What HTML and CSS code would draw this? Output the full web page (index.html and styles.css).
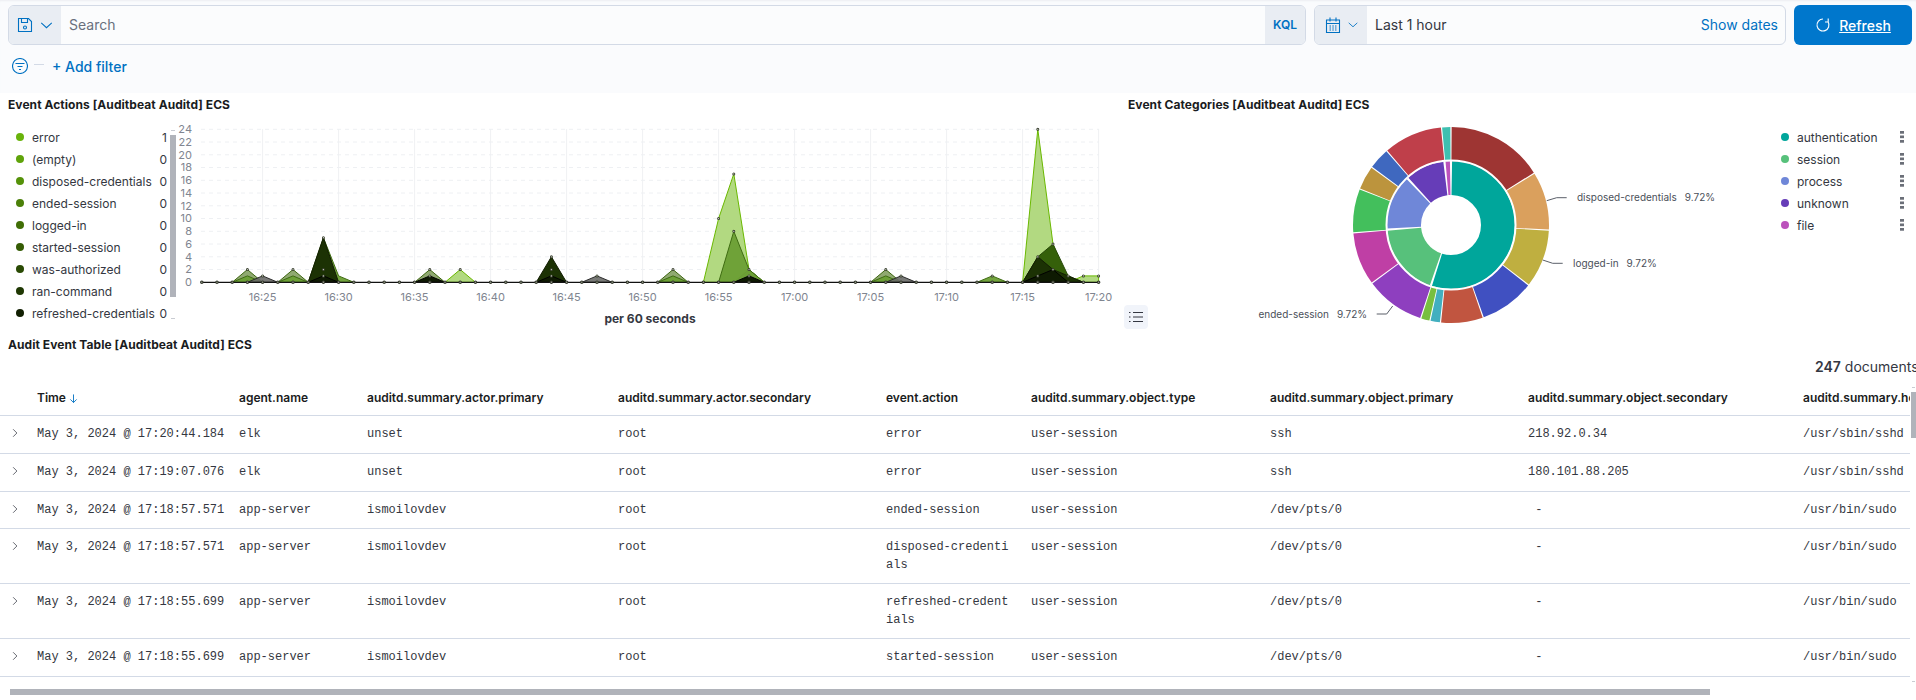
FILE: index.html
```html
<!DOCTYPE html>
<html lang="en">
<head>
<meta charset="utf-8">
<title>Audit dashboard</title>
<link rel="stylesheet" href="styles.css">
</head>
<body>
<header class="topbar">
  <div class="query-row">
    <div class="search">
      <button class="prepend">
        <svg class="ico" viewBox="0 0 16 16" width="16" height="16"><path d="M1.500 1.500h10l3 3v10h-13z M4.500 1.500v4h6v-4"/><circle cx="8" cy="10.500" r="1.500"/></svg>
        <svg class="chev" viewBox="0 0 14 8" width="13" height="7"><path d="M1 1l6 5.500L13 1"/></svg>
      </button>
      <div class="placeholder">Search</div>
      <div class="kql">KQL</div>
    </div>
    <div class="datepicker">
      <button class="prepend">
        <svg class="ico" viewBox="0 0 16 16" width="16" height="16"><path d="M1.500 3h13v12.500h-13z M1.500 6.500h13 M5 .5v4 M11 .5v4 M4.500 9h1.500 M7.300 9h1.500 M10 9h1.500 M4.500 11h1.500 M7.300 11h1.500 M10 11h1.500 M4.500 13h1.500 M7.300 13h1.500 M10 13h1.500"/></svg>
        <svg class="chev" viewBox="0 0 14 8" width="10" height="6"><path d="M1 1l6 5.500L13 1"/></svg>
      </button>
      <div class="range">Last 1 hour</div>
      <div class="show-dates">Show dates</div>
    </div>
    <button class="refresh">
      <svg class="ico-white" viewBox="0 0 16 16" width="16" height="16"><path d="M13.200 5A6 6 0 1 1 8 2 M13.200 1.500V5H10"/></svg>
      <span>Refresh</span>
    </button>
  </div>
  <div class="filter-row">
    <svg class="ico" viewBox="0 0 16 16" width="16" height="16"><circle cx="8" cy="8" r="7.500"/><path d="M3.500 5.500h9 M5.500 8.500h5 M7 11.500h2"/></svg>
    <span class="dash"></span>
    <span class="add-filter">+ Add filter</span>
  </div>
</header>

<main>
  <section class="panels">
    <div class="panel">
      <h2 class="title">Event Actions [Auditbeat Auditd] ECS</h2>
      <div class="panel-body">
        <ul class="legend actions">
          <li><i class="dot c1"></i><span class="name">error</span><span class="val">1</span></li>
          <li><i class="dot c2"></i><span class="name">(empty)</span><span class="val">0</span></li>
          <li><i class="dot c3"></i><span class="name">disposed-credentials</span><span class="val">0</span></li>
          <li><i class="dot c4"></i><span class="name">ended-session</span><span class="val">0</span></li>
          <li><i class="dot c5"></i><span class="name">logged-in</span><span class="val">0</span></li>
          <li><i class="dot c6"></i><span class="name">started-session</span><span class="val">0</span></li>
          <li><i class="dot c7"></i><span class="name">was-authorized</span><span class="val">0</span></li>
          <li><i class="dot c8"></i><span class="name">ran-command</span><span class="val">0</span></li>
          <li><i class="dot c9"></i><span class="name">refreshed-credentials</span><span class="val">0</span></li>
        </ul>
        <div class="legend-scroll"><div class="legend-thumb"></div></div>
        <svg class="area-chart" viewBox="176 120 944 210" width="944" height="210">
          <g class="grid-v">
            <path d="M262.600 129V282M338.600 129V282M414.600 129V282M490.600 129V282M566.600 129V282M642.600 129V282M718.600 129V282M794.600 129V282M870.600 129V282M946.600 129V282M1022.600 129V282M1098.600 129V282"/>
          </g>
          <g class="grid-h">
            <path d="M201 129.300H1099M201 142H1099M201 154.800H1099M201 167.500H1099M201 180.300H1099M201 193H1099M201 205.800H1099M201 218.500H1099M201 231.300H1099M201 244H1099M201 256.800H1099M201 269.500H1099"/>
          </g>
          <g class="ticks-y">
            <text x="192" y="133">24</text><text x="192" y="146">22</text><text x="192" y="159">20</text><text x="192" y="171">18</text><text x="192" y="184">16</text><text x="192" y="197">14</text><text x="192" y="210">12</text><text x="192" y="222">10</text><text x="192" y="235">8</text><text x="192" y="248">6</text><text x="192" y="261">4</text><text x="192" y="273">2</text><text x="192" y="286">0</text>
          </g>
          <g class="ticks-x">
            <text x="262.600" y="301">16:25</text><text x="338.600" y="301">16:30</text><text x="414.600" y="301">16:35</text><text x="490.600" y="301">16:40</text><text x="566.600" y="301">16:45</text><text x="642.600" y="301">16:50</text><text x="718.600" y="301">16:55</text><text x="794.600" y="301">17:00</text><text x="870.600" y="301">17:05</text><text x="946.600" y="301">17:10</text><text x="1022.600" y="301">17:15</text><text x="1098.600" y="301">17:20</text>
          </g>
          <text class="axis-title" x="650" y="323">per 60 seconds</text>

          <g class="s-light">
            <path d="M445 282.300L460.200 269.550L475.400 282.300Z"/>
            <path d="M703.400 282.300L718.600 218.550L733.800 173.900L749 269.550L764.200 282.300Z"/>
            <path d="M1022.600 282.300L1037.800 129.300L1053 244.050L1068.200 282.300Z"/>
            <path d="M1068.200 282.300L1083.400 275.900H1098.600V282.300Z"/>
          </g>
          <g class="s-olive">
            <path d="M232.200 282.300L247.400 269.550L262.600 282.300Z"/>
            <path d="M277.800 282.300L293 269.550L308.200 282.300Z"/>
            <path d="M414.600 282.300L429.800 269.550L445 282.300Z"/>
            <path d="M657.800 282.300L673 269.550L688.200 282.300Z"/>
            <path d="M733.800 282.300L749 269.550L764.200 282.300Z"/>
            <path d="M870.600 282.300L885.800 269.550L901 282.300Z"/>
          </g>
          <g class="s-green">
            <path d="M232.200 282.300L247.400 275.900L262.600 282.300Z"/>
            <path d="M277.800 282.300L293 275.900L308.200 282.300Z"/>
            <path d="M308.200 282.300L323.400 237.700L338.600 275.900L353.800 282.300Z"/>
            <path d="M657.800 282.300L673 275.900L688.200 282.300Z"/>
            <path d="M718.600 282.300L733.800 231.300L749 269.550L764.200 282.300Z"/>
            <path d="M870.600 282.300L885.800 275.900L901 282.300Z"/>
            <path d="M977 282.300L992.200 275.900L1007.400 282.300Z"/>
          </g>
          <g class="s-grey">
            <path d="M247.400 282.300L262.600 275.900L277.800 282.300Z"/>
            <path d="M581.800 282.300L597 275.900L612.200 282.300Z"/>
            <path d="M885.800 282.300L901 275.900L916.200 282.300Z"/>
          </g>
          <path class="s-forest" d="M1022.600 282.300L1037.800 256.800L1053 244.050L1068.200 275.900L1083.400 282.300Z"/>
          <g class="s-dark">
            <path d="M308.200 282.300L323.400 237.700L338.600 282.300Z"/>
            <path d="M536.200 282.300L551.400 256.800L566.600 282.300Z"/>
            <path d="M1022.600 282.300L1037.800 256.800L1053 269.550L1068.200 275.900L1083.400 282.300Z"/>
          </g>
          <g class="s-black">
            <path d="M308.200 282.300L323.400 275.900L338.600 282.300Z"/>
            <path d="M414.600 282.300L429.800 275.900L445 282.300Z"/>
            <path d="M536.200 282.300L551.400 275.900L566.600 282.300Z"/>
            <path d="M733.800 282.300L749 275.900L764.200 282.300Z"/>
            <path d="M1022.600 282.300L1037.800 275.900L1053 269.550L1068.200 282.300Z"/>
          </g>
          <path class="baseline" d="M201.800 282.300H1098.600"/>
          <path class="marks-out" d="M201.800 282.300H1098.800"/>
          <path class="marks-in" d="M201.800 282.300H1098.800"/>
          <path class="peaks-out" d="M247.400 269.550h0M262.600 275.900h0M293 269.550h0M323.400 237.700h0M323.400 269.550h0M323.400 275.900h0M429.800 269.550h0M429.800 275.900h0M460.200 269.550h0M551.400 256.800h0M551.400 269.550h0M551.400 275.900h0M597 275.900h0M673 269.550h0M718.600 218.550h0M733.800 173.900h0M733.800 231.300h0M749 269.550h0M749 275.900h0M885.800 269.550h0M901 275.900h0M992.200 275.900h0M1037.800 129.300h0M1037.800 256.800h0M1037.800 275.900h0M1053 244.050h0M1053 269.550h0M1068.200 275.900h0M1083.400 275.900h0M1098.600 275.900h0"/>
          <path class="peaks-in" d="M247.400 269.550h0M262.600 275.900h0M293 269.550h0M323.400 237.700h0M323.400 269.550h0M323.400 275.900h0M429.800 269.550h0M429.800 275.900h0M460.200 269.550h0M551.400 256.800h0M551.400 269.550h0M551.400 275.900h0M597 275.900h0M673 269.550h0M718.600 218.550h0M733.800 173.900h0M733.800 231.300h0M749 269.550h0M749 275.900h0M885.800 269.550h0M901 275.900h0M992.200 275.900h0M1037.800 129.300h0M1037.800 256.800h0M1037.800 275.900h0M1053 244.050h0M1053 269.550h0M1068.200 275.900h0M1083.400 275.900h0M1098.600 275.900h0"/>
        </svg>
      </div>
    </div>

    <div class="panel categories">
      <h2 class="title">Event Categories [Auditbeat Auditd] ECS</h2>
      <div class="panel-body">
        <svg class="pie" viewBox="1124 120 650 210" width="650" height="210">
          <g class="ring-inner" transform="rotate(-90 1451 225)">
            <circle cx="1451" cy="225" r="47" pathLength="360" stroke="#00a69b" stroke-dasharray="196.400 360" stroke-dashoffset="-1"/>
            <circle cx="1451" cy="225" r="47" pathLength="360" stroke="#57c17b" stroke-dasharray="65.300 360" stroke-dashoffset="-199.400"/>
            <circle cx="1451" cy="225" r="47" pathLength="360" stroke="#6f87d8" stroke-dasharray="49.300 360" stroke-dashoffset="-266.700"/>
            <circle cx="1451" cy="225" r="47" pathLength="360" stroke="#663db8" stroke-dasharray="35 360" stroke-dashoffset="-318"/>
            <circle cx="1451" cy="225" r="47" pathLength="360" stroke="#bc52bc" stroke-dasharray="4 360" stroke-dashoffset="-355"/>
          </g>
          <g class="ring-outer" transform="rotate(-90 1451 225)">
            <circle cx="1451" cy="225" r="81" pathLength="360" stroke="#9e3533" stroke-dasharray="57.300 360" stroke-dashoffset="-.4"/>
            <circle cx="1451" cy="225" r="81" pathLength="360" stroke="#daa05d" stroke-dasharray="34.300 360" stroke-dashoffset="-58.400"/>
            <circle cx="1451" cy="225" r="81" pathLength="360" stroke="#bfaf40" stroke-dasharray="34 360" stroke-dashoffset="-93.400"/>
            <circle cx="1451" cy="225" r="81" pathLength="360" stroke="#4050c1" stroke-dasharray="32.300 360" stroke-dashoffset="-128.100"/>
            <circle cx="1451" cy="225" r="81" pathLength="360" stroke="#c15540" stroke-dasharray="24.800 360" stroke-dashoffset="-161.100"/>
            <circle cx="1451" cy="225" r="81" pathLength="360" stroke="#42afbf" stroke-dasharray="5.500 360" stroke-dashoffset="-186.600"/>
            <circle cx="1451" cy="225" r="81" pathLength="360" stroke="#78bf3f" stroke-dasharray="4.900 360" stroke-dashoffset="-192.800"/>
            <circle cx="1451" cy="225" r="81" pathLength="360" stroke="#8e3fbf" stroke-dasharray="34.900 360" stroke-dashoffset="-198.400"/>
            <circle cx="1451" cy="225" r="81" pathLength="360" stroke="#bf3fa5" stroke-dasharray="30.900 360" stroke-dashoffset="-234"/>
            <circle cx="1451" cy="225" r="81" pathLength="360" stroke="#43bf5c" stroke-dasharray="25.600 360" stroke-dashoffset="-265.600"/>
            <circle cx="1451" cy="225" r="81" pathLength="360" stroke="#bc943d" stroke-dasharray="13.800 360" stroke-dashoffset="-291.900"/>
            <circle cx="1451" cy="225" r="81" pathLength="360" stroke="#3f68bf" stroke-dasharray="12.300 360" stroke-dashoffset="-306.400"/>
            <circle cx="1451" cy="225" r="81" pathLength="360" stroke="#bf3f4a" stroke-dasharray="34.600 360" stroke-dashoffset="-319.400"/>
            <circle cx="1451" cy="225" r="81" pathLength="360" stroke="#3fbfb0" stroke-dasharray="4.900 360" stroke-dashoffset="-354.700"/>
          </g>
          <circle class="ring-gap" cx="1451" cy="225" r="64.500"/>
          <path class="leader" d="M1546.700 200.700L1556.700 197.700H1566.700"/>
          <path class="leader" d="M1542.700 260L1552.700 263.300H1562.700"/>
          <path class="leader" d="M1392.700 306L1386.700 314H1376.700"/>
          <text class="pie-label" x="1577" y="201">disposed-credentials<tspan dx="8">9.72%</tspan></text>
          <text class="pie-label" x="1573" y="267">logged-in<tspan dx="8">9.72%</tspan></text>
          <text class="pie-label" x="1258.500" y="317.500">ended-session<tspan dx="8">9.72%</tspan></text>
        </svg>
        <button class="legend-toggle">
          <svg viewBox="0 0 16 16" width="16" height="16"><path d="M5 3.500h10M5 8h10M5 12.500h10M1 3.500h1.500M1 8h1.500M1 12.500h1.500"/></svg>
        </button>
        <ul class="legend cats">
          <li><i class="dot k1"></i><span class="name">authentication</span><i class="kebab"></i></li>
          <li><i class="dot k2"></i><span class="name">session</span><i class="kebab"></i></li>
          <li><i class="dot k3"></i><span class="name">process</span><i class="kebab"></i></li>
          <li><i class="dot k4"></i><span class="name">unknown</span><i class="kebab"></i></li>
          <li><i class="dot k5"></i><span class="name">file</span><i class="kebab"></i></li>
        </ul>
      </div>
    </div>
  </section>

  <section class="audit">
    <h2 class="title audit-title">Audit Event Table [Auditbeat Auditd] ECS</h2>
    <div class="hits"><b>247</b> documents</div>
    <div class="table-area">
      <div class="table-clip">
        <table>
          <colgroup>
            <col class="w0"><col class="w1"><col class="w2"><col class="w3"><col class="w4"><col class="w5"><col class="w6"><col class="w7"><col class="w8"><col class="w9">
          </colgroup>
          <thead>
            <tr>
              <th></th>
              <th>Time <svg class="sort" viewBox="0 0 10 10" width="9" height="9"><path d="M5 .5v9M1.500 6L5 9.500 8.500 6"/></svg></th>
              <th>agent.name</th>
              <th>auditd.summary.actor.primary</th>
              <th>auditd.summary.actor.secondary</th>
              <th>event.action</th>
              <th>auditd.summary.object.type</th>
              <th>auditd.summary.object.primary</th>
              <th>auditd.summary.object.secondary</th>
              <th>auditd.summary.how</th>
            </tr>
          </thead>
          <tbody>
            <tr>
              <td class="exp"><svg viewBox="0 0 8 12" width="6" height="10"><path d="M1.500 1l5 5-5 5"/></svg></td>
              <td>May 3, 2024 @ 17:20:44.184</td><td>elk</td><td>unset</td><td>root</td><td class="wrap">error</td><td>user-session</td><td>ssh</td><td>218.92.0.34</td><td>/usr/sbin/sshd</td>
            </tr>
            <tr>
              <td class="exp"><svg viewBox="0 0 8 12" width="6" height="10"><path d="M1.500 1l5 5-5 5"/></svg></td>
              <td>May 3, 2024 @ 17:19:07.076</td><td>elk</td><td>unset</td><td>root</td><td class="wrap">error</td><td>user-session</td><td>ssh</td><td>180.101.88.205</td><td>/usr/sbin/sshd</td>
            </tr>
            <tr class="tight">
              <td class="exp"><svg viewBox="0 0 8 12" width="6" height="10"><path d="M1.500 1l5 5-5 5"/></svg></td>
              <td>May 3, 2024 @ 17:18:57.571</td><td>app-server</td><td>ismoilovdev</td><td>root</td><td class="wrap">ended-session</td><td>user-session</td><td>/dev/pts/0</td><td>&nbsp;-</td><td>/usr/bin/sudo</td>
            </tr>
            <tr class="tight">
              <td class="exp"><svg viewBox="0 0 8 12" width="6" height="10"><path d="M1.500 1l5 5-5 5"/></svg></td>
              <td>May 3, 2024 @ 17:18:57.571</td><td>app-server</td><td>ismoilovdev</td><td>root</td><td class="wrap">disposed-credentials</td><td>user-session</td><td>/dev/pts/0</td><td>&nbsp;-</td><td>/usr/bin/sudo</td>
            </tr>
            <tr class="tight">
              <td class="exp"><svg viewBox="0 0 8 12" width="6" height="10"><path d="M1.500 1l5 5-5 5"/></svg></td>
              <td>May 3, 2024 @ 17:18:55.699</td><td>app-server</td><td>ismoilovdev</td><td>root</td><td class="wrap">refreshed-credentials</td><td>user-session</td><td>/dev/pts/0</td><td>&nbsp;-</td><td>/usr/bin/sudo</td>
            </tr>
            <tr>
              <td class="exp"><svg viewBox="0 0 8 12" width="6" height="10"><path d="M1.500 1l5 5-5 5"/></svg></td>
              <td>May 3, 2024 @ 17:18:55.699</td><td>app-server</td><td>ismoilovdev</td><td>root</td><td class="wrap">started-session</td><td>user-session</td><td>/dev/pts/0</td><td>&nbsp;-</td><td>/usr/bin/sudo</td>
            </tr>
          </tbody>
        </table>
      </div>
      <div class="vscroll"><div class="vthumb"></div></div>
    </div>
    <div class="hscroll"><div class="hthumb"></div></div>
  </section>
</main>
</body>
</html>
```
FILE: styles.css
```css
* { box-sizing: border-box; }
html, body { margin: 0; height: 700px; overflow: hidden; background: #fff; }
body { font-family: Inter, "Liberation Sans", sans-serif; font-size: 12px; color: #343741; }
button { font: inherit; border: 0; padding: 0; margin: 0; }
ul { list-style: none; margin: 0; padding: 0; }
h2 { margin: 0; }

/* top bar */
.topbar { height: 93px; background: #fafbfd; padding: 5px 4px 0 8px; box-shadow: inset 0 2px 2px -1px #eceef2; }
.query-row { display: flex; height: 40px; gap: 8px; }
.search, .datepicker { display: flex; align-items: stretch; border: 1px solid #d3dae6; border-radius: 6px; overflow: hidden; background: #fbfcfd; font-size: 14px; }
.search { flex: 0 0 1298px; }
.datepicker { flex: 0 0 472px; }
.prepend { width: 52px; background: #e9edf3; display: flex; align-items: center; justify-content: center; gap: 7px; flex: none; }
.ico { fill: none; stroke: #0071c2; stroke-width: 1.100; flex: none; }
.chev { fill: none; stroke: #0071c2; stroke-width: 1.200; }
.placeholder { flex: 1; padding-left: 8px; line-height: 38px; color: #69707d; }
.kql { width: 40px; background: #e9edf3; color: #0071c2; font-size: 12px; font-weight: 600; line-height: 38px; text-align: center; }
.range { flex: 1; padding-left: 8px; line-height: 38px; color: #343741; }
.show-dates { padding-right: 7px; line-height: 38px; color: #0071c2; }
.refresh { flex: 0 0 118px; background: #0077cc; color: #fff; border-radius: 6px; font-size: 14px; font-weight: 500; display: flex; align-items: center; justify-content: center; gap: 8px; }
.refresh span { text-decoration: underline; }
.ico-white { fill: none; stroke: #fff; stroke-width: 1.100; }
.filter-row { display: flex; align-items: center; margin-top: 11px; height: 20px; padding-left: 4px; }
.dash { width: 10px; height: 1px; background: #d3dae6; margin: 0 8px 4px 6px; }
.add-filter { font-size: 14px; font-weight: 500; color: #0071c2; }

/* panels */
.panels { display: grid; grid-template-columns: 1124px 792px; height: 243px; }
.title { font-size: 12px; font-weight: 700; color: #1a1c21; line-height: 18px; letter-spacing: .06px; }
.panel > .title { height: 27px; padding: 3px 0 0 8px; }
.categories > .title { padding-left: 4px; }
.panel-body { display: flex; height: 216px; position: relative; }
.legend { padding-top: 6px; font-size: 12px; }
.legend li { display: flex; align-items: center; height: 22px; }
.actions { width: 170px; padding-left: 16px; padding-right: 3px; flex: none; }
.dot { width: 8px; height: 8px; border-radius: 50%; flex: none; margin-right: 8px; }
.name { flex: 1; white-space: nowrap; }
.val { margin-left: 2px; }
.c1 { background: #69b30b; } .c2 { background: #5fa30a; } .c3 { background: #559209; }
.c4 { background: #4b8008; } .c5 { background: #406e06; } .c6 { background: #355c05; }
.c7 { background: #2a4a04; } .c8 { background: #1f3803; } .c9 { background: #121f02; }
.legend-scroll { width: 6px; flex: none; padding-top: 15px; position: relative; }
.legend-scroll::before, .legend-scroll::after { content: ""; position: absolute; left: 1px; width: 4px; height: 1px; background: #c9ccd2; }
.legend-scroll::before { top: 10px; }
.legend-scroll::after { top: 198px; }
.legend-thumb { height: 162px; background: #b0b3ba; }
.area-chart { flex: none; display: block; }
.grid-v path { stroke: #f0f1f3; fill: none; }
.grid-h path { stroke: #eef0f3; fill: none; stroke-dasharray: 4 4; }
.ticks-y text { font-size: 11px; fill: #808590; text-anchor: end; }
.ticks-x text { font-size: 11px; fill: #808590; text-anchor: middle; }
.axis-title { font-size: 12px; font-weight: 700; fill: #343741; text-anchor: middle; }
.s-light path { fill: #aed77a; fill-opacity: .95; stroke: #6ab800; stroke-width: 1; }
.s-olive path { fill: #7c9a58; fill-opacity: .85; stroke: #3f6812; stroke-width: 1; }
.s-green path { fill: #6b9f34; fill-opacity: .95; stroke: #3f6c12; stroke-width: 1; }
.s-grey path { fill: #6a6b68; fill-opacity: .9; stroke: #2b2b2b; stroke-width: 1; }
.s-forest { fill: #35600a; stroke: #28490a; stroke-width: 1; }
.s-dark path { fill: #1c3204; stroke: #121d03; stroke-width: 1; }
.s-black path { fill: #0e1a02; stroke: #000; stroke-width: 1; }
.baseline { stroke: #111; stroke-width: 1.200; fill: none; }
.marks-out { fill: none; stroke: #33372c; stroke-width: 3.600; stroke-linecap: round; stroke-dasharray: 0 15.200; }
.marks-in { fill: none; stroke: #9aa08e; stroke-width: 1.400; stroke-linecap: round; stroke-dasharray: 0 15.200; }
.peaks-out { fill: none; stroke: #3a4030; stroke-width: 3; stroke-linecap: round; }
.peaks-in { fill: none; stroke: #d4dac8; stroke-width: 1.200; stroke-linecap: round; }

.pie { flex: none; display: block; }
.ring-inner circle { fill: none; stroke-width: 34; }
.ring-outer circle { fill: none; stroke-width: 34; }
.ring-gap { fill: none; stroke: #fff; stroke-width: 2; }
.leader { fill: none; stroke: #5a5f69; stroke-width: 1; }
.pie-label { font-size: 10px; fill: #4a4f59; }
.legend-toggle { position: absolute; left: 0; top: 185px; width: 24px; height: 24px; border-radius: 4px; background: #f1f4fa; display: flex; align-items: center; justify-content: center; }
.legend-toggle svg { fill: none; stroke: #343741; stroke-width: 1; }
.cats { width: 142px; padding-left: 7px; flex: none; }
.cats .dot { margin-right: 8px; }
.k1 { background: #00a69b; } .k2 { background: #57c17b; } .k3 { background: #6f87d8; } .k4 { background: #663db8; } .k5 { background: #bc52bc; }
.kebab { width: 4px; height: 12px; margin-right: 12px; flex: none; background: linear-gradient(#6b6f78 3px, transparent 3px) 0 0 / 4px 4.500px; }

/* table */
.audit-title { height: 18px; padding-left: 8px; }
.hits { height: 24px; padding: 3px 0 0 1815px; font-size: 14px; line-height: 20px; white-space: nowrap; overflow: hidden; }
.hits b { font-weight: 600; }
.table-area { display: flex; height: 311px; }
.table-clip { width: 1910px; flex: none; overflow: hidden; margin-right: 1px; }
table { border-collapse: separate; border-spacing: 0; table-layout: fixed; width: 1999px; }
.w0 { width: 33px; } .w1 { width: 202px; } .w2 { width: 128px; } .w3 { width: 251px; } .w4 { width: 268px; }
.w5 { width: 145px; } .w6 { width: 239px; } .w7 { width: 258px; } .w8 { width: 275px; } .w9 { width: 200px; }
th { height: 38px; text-align: left; font-weight: 600; font-size: 12px; color: #1a1c21; padding: 2px 4px 0; border-bottom: 1px solid #d3dae6; white-space: nowrap; }
.sort { fill: none; stroke: #0071c2; stroke-width: 1; vertical-align: -1px; }
td { font-family: "Liberation Mono", monospace; font-size: 12px; line-height: 18px; color: #343741; padding: 9px 4px 10px; border-bottom: 1px solid #d3dae6; vertical-align: top; white-space: nowrap; }
td.wrap { white-space: normal; word-break: break-all; padding-right: 16px; }
.tight td { padding-bottom: 9px; }
td.exp { padding-left: 12px; padding-right: 0; }
.exp svg { fill: none; stroke: #343741; stroke-width: 1; display: block; margin-top: 3px; }
.vscroll { width: 5px; padding-top: 14px; position: relative; }
.vscroll::before, .vscroll::after { content: ""; position: absolute; left: 1px; width: 3px; height: 1px; background: #c9ccd2; }
.vscroll::before { top: 9px; }
.vscroll::after { top: 303px; }
.vthumb { height: 46px; background: #b0b3ba; }
.hscroll { padding-left: 10px; }
.hthumb { width: 1700px; height: 6px; background: #b0b3ba; }
```
